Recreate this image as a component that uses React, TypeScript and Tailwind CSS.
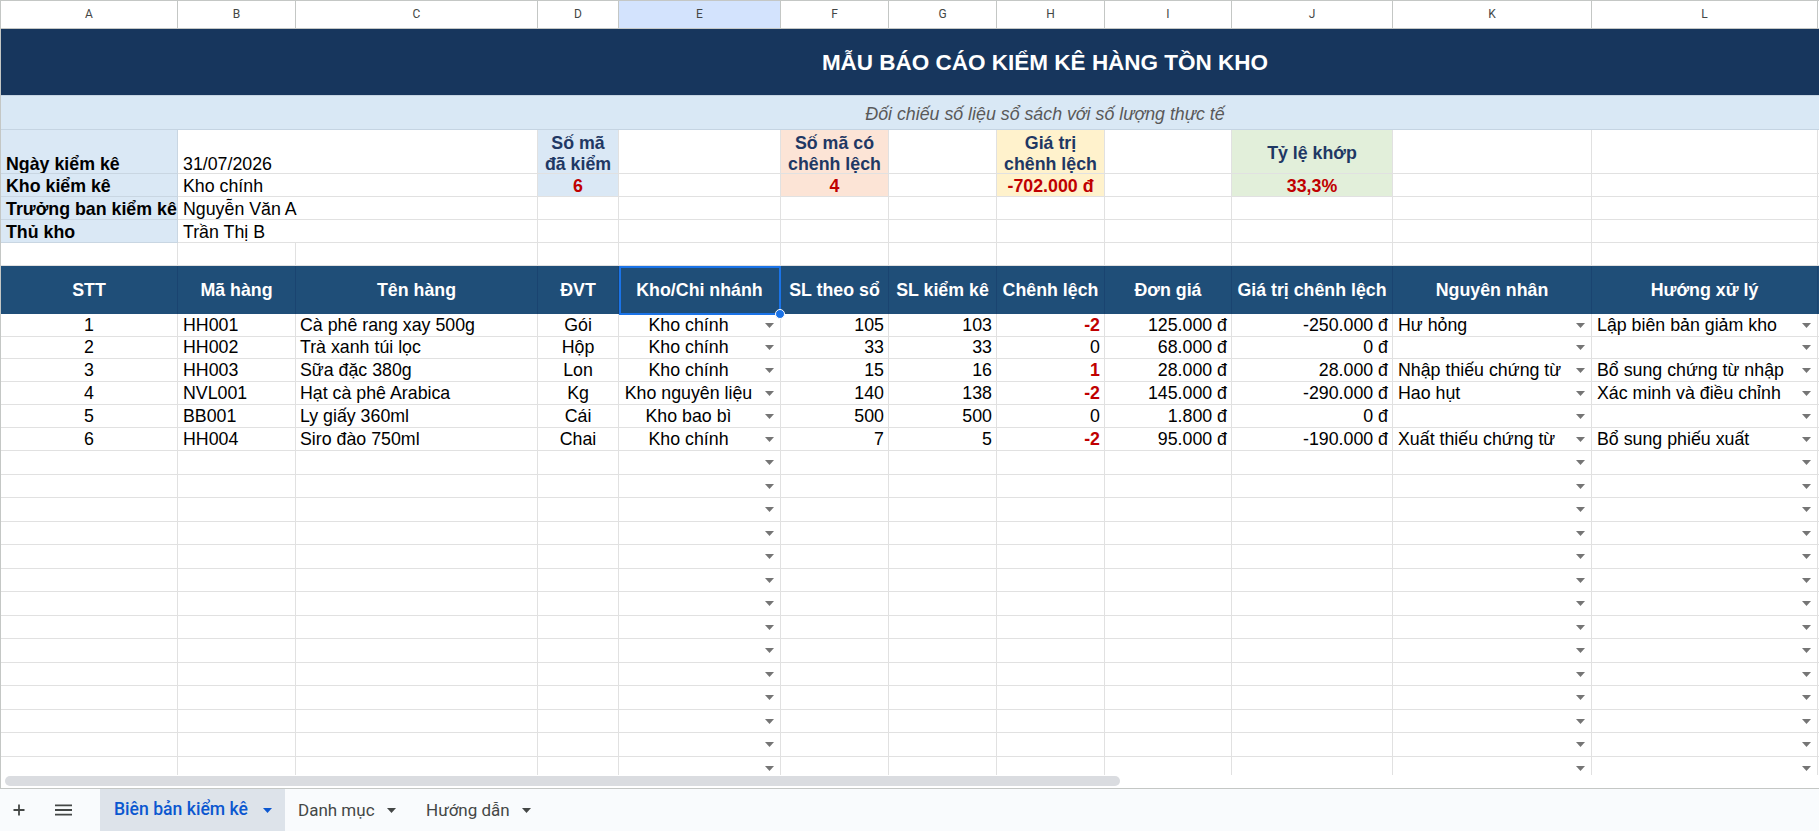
import React from "react";

const COLS = [
  "w-[177px]",
  "w-[118px]",
  "w-[242px]",
  "w-[81px]",
  "w-[162px]",
  "w-[108px]",
  "w-[108px]",
  "w-[108px]",
  "w-[127px]",
  "w-[161px]",
  "w-[199px]",
  "w-[226px]",
];
const LETTERS = ["A", "B", "C", "D", "E", "F", "G", "H", "I", "J", "K", "L"];
const GRID = "border-[#e1e1e1]";

type CellProps = { w: string; b?: string; className?: string; children?: React.ReactNode };
function Cell({ w, b = GRID, className = "", children }: CellProps) {
  return (
    <div
      className={`${w} ${b} shrink-0 h-full border-r border-b flex items-center whitespace-nowrap overflow-hidden ${className}`}
    >
      {children}
    </div>
  );
}

function Filler() {
  return <div className="flex-1 h-full border-b border-[#e1e1e1]" />;
}

function Arrow({ color = "#757575" }: { color?: string }) {
  return (
    <svg width="9" height="5" viewBox="0 0 9 5" className="shrink-0">
      <path d="M0 0H9L4.5 5Z" fill={color} />
    </svg>
  );
}

function ArrowBox() {
  return (
    <span className="w-[22px] h-full shrink-0 flex items-center justify-center">
      <Arrow />
    </span>
  );
}

const DATA: string[][] = [
  ["1", "HH001", "Cà phê rang xay 500g", "Gói", "Kho chính", "105", "103", "-2", "125.000 đ", "-250.000 đ", "Hư hỏng", "Lập biên bản giảm kho"],
  ["2", "HH002", "Trà xanh túi lọc", "Hộp", "Kho chính", "33", "33", "0", "68.000 đ", "0 đ", "", ""],
  ["3", "HH003", "Sữa đặc 380g", "Lon", "Kho chính", "15", "16", "1", "28.000 đ", "28.000 đ", "Nhập thiếu chứng từ", "Bổ sung chứng từ nhập"],
  ["4", "NVL001", "Hạt cà phê Arabica", "Kg", "Kho nguyên liệu", "140", "138", "-2", "145.000 đ", "-290.000 đ", "Hao hụt", "Xác minh và điều chỉnh"],
  ["5", "BB001", "Ly giấy 360ml", "Cái", "Kho bao bì", "500", "500", "0", "1.800 đ", "0 đ", "", ""],
  ["6", "HH004", "Siro đào 750ml", "Chai", "Kho chính", "7", "5", "-2", "95.000 đ", "-190.000 đ", "Xuất thiếu chứng từ", "Bổ sung phiếu xuất"],
];
const DATA_H = ["h-[23px]", "h-[22px]", "h-[23px]", "h-[23px]", "h-[23px]", "h-[23px]"];
const EMPTY_H = [
  "h-[24px]", "h-[23px]", "h-[24px]", "h-[23px]", "h-[24px]", "h-[23px]", "h-[24px]",
  "h-[23px]", "h-[24px]", "h-[23px]", "h-[24px]", "h-[23px]", "h-[24px]", "h-[23px]", "h-[24px]",
];
const HEADERS = [
  "STT", "Mã hàng", "Tên hàng", "ĐVT", "Kho/Chi nhánh", "SL theo sổ", "SL kiểm kê",
  "Chênh lệch", "Đơn giá", "Giá trị chênh lệch", "Nguyên nhân", "Hướng xử lý",
];

const LABEL = "bg-[#dae8f5] font-bold pl-[5px] text-black";
const NAVY = "text-[#1f3864] font-bold";
const RED = "text-[#c00000] font-bold";
const LOW = "items-end leading-[19px]";

function DataRow({ r, h }: { r: string[]; h: string }) {
  const diffNonZero = r[7] !== "0";
  return (
    <div className={`flex shrink-0 ${h}`}>
      <Cell w={COLS[0]} className="justify-center">{r[0]}</Cell>
      <Cell w={COLS[1]} className="pl-[5px]">{r[1]}</Cell>
      <Cell w={COLS[2]} className="pl-[4px]">{r[2]}</Cell>
      <Cell w={COLS[3]} className="justify-center">{r[3]}</Cell>
      <Cell w={COLS[4]}>
        <span className="flex-1 text-center">{r[4]}</span>
        <ArrowBox />
      </Cell>
      <Cell w={COLS[5]} className="justify-end pr-[4px]">{r[5]}</Cell>
      <Cell w={COLS[6]} className="justify-end pr-[4px]">{r[6]}</Cell>
      <Cell w={COLS[7]} className={`justify-end pr-[4px] ${diffNonZero ? RED : ""}`}>{r[7]}</Cell>
      <Cell w={COLS[8]} className="justify-end pr-[4px]">{r[8]}</Cell>
      <Cell w={COLS[9]} className="justify-end pr-[4px]">{r[9]}</Cell>
      <Cell w={COLS[10]}>
        <span className="flex-1 pl-[5px] overflow-hidden">{r[10]}</span>
        <ArrowBox />
      </Cell>
      <Cell w={COLS[11]}>
        <span className="flex-1 pl-[5px] overflow-hidden">{r[11]}</span>
        <ArrowBox />
      </Cell>
      <Filler />
    </div>
  );
}

function EmptyRow({ h }: { h: string }) {
  return (
    <div className={`flex shrink-0 ${h}`}>
      {COLS.map((w, i) => (
        <Cell key={i} w={w} className="justify-end">
          {i === 4 || i === 10 || i === 11 ? <ArrowBox /> : null}
        </Cell>
      ))}
      <Filler />
    </div>
  );
}

export default function App() {
  return (
    <div className="w-[1819px] h-[831px] overflow-hidden bg-white flex flex-col font-['Liberation_Sans',Arial,sans-serif] text-[17.8px] leading-[21px] text-black">
      {/* sheet area */}
      <div className="h-[788px] shrink-0 flex flex-col border-l border-[#c4c7c5] overflow-hidden">
        <div className="h-[775px] shrink-0 flex flex-col overflow-hidden">
          {/* column letters */}
          <div className="flex h-[29px] shrink-0 border-t border-[#c4c7c5]">
            {LETTERS.map((l, i) => (
              <div
                key={l}
                className={`${COLS[i]} shrink-0 h-full border-r border-b border-[#c4c7c5] flex items-center justify-center text-[12px] text-[#444746] font-['Roboto',Arial,sans-serif] ${
                  i === 4 ? "bg-[#d3e3fd]" : "bg-white"
                }`}
              >
                {l}
              </div>
            ))}
            <div className="flex-1 h-full border-b border-[#c4c7c5]" />
          </div>

          {/* title */}
          <div className="flex h-[67px] shrink-0 bg-[#17365d] border-b border-[#c5d4e2] overflow-hidden">
            <div className="w-[2088px] shrink-0 flex items-center justify-center text-white font-bold text-[22.5px] whitespace-nowrap">
              MẪU BÁO CÁO KIỂM KÊ HÀNG TỒN KHO
            </div>
          </div>

          {/* subtitle */}
          <div className="flex h-[34px] shrink-0 bg-[#d9e8f5] border-b border-[#c5d4e2] overflow-hidden">
            <div className="w-[2088px] shrink-0 flex items-center justify-center pt-[3px] italic text-[#595959] whitespace-nowrap">
              Đối chiếu số liệu sổ sách với số lượng thực tế
            </div>
          </div>

          {/* info row 1 */}
          <div className="flex h-[44px] shrink-0">
            <Cell w={COLS[0]} b="border-[#c9d6e2]" className={`${LABEL} items-end`}>
              <span className="-mb-[2px]">Ngày kiểm kê</span>
            </Cell>
            <Cell w="w-[360px]" className="pl-[5px] items-end">
              <span className="-mb-[2px]">31/07/2026</span>
            </Cell>
            <Cell w={COLS[3]} className={`bg-[#dae8f5] ${NAVY} items-end justify-center text-center`}>
              <span className="block -mb-[2px]">
                Số mã
                <br />
                đã kiểm
              </span>
            </Cell>
            <Cell w={COLS[4]} />
            <Cell w={COLS[5]} className={`bg-[#fce4d6] ${NAVY} items-end justify-center text-center`}>
              <span className="block -mb-[2px]">
                Số mã có
                <br />
                chênh lệch
              </span>
            </Cell>
            <Cell w={COLS[6]} />
            <Cell w={COLS[7]} className={`bg-[#fff2cc] ${NAVY} items-end justify-center text-center`}>
              <span className="block -mb-[2px]">
                Giá trị
                <br />
                chênh lệch
              </span>
            </Cell>
            <Cell w={COLS[8]} />
            <Cell w={COLS[9]} className={`bg-[#e2efda] ${NAVY} justify-center pt-[3px]`}>Tỷ lệ khớp</Cell>
            <Cell w={COLS[10]} />
            <Cell w={COLS[11]} />
            <Filler />
          </div>

          {/* info row 2 */}
          <div className="flex h-[23px] shrink-0">
            <Cell w={COLS[0]} b="border-[#c9d6e2]" className={`${LABEL} ${LOW}`}>Kho kiểm kê</Cell>
            <Cell w="w-[360px]" className={`pl-[5px] ${LOW}`}>Kho chính</Cell>
            <Cell w={COLS[3]} className={`bg-[#dae8f5] ${RED} justify-center ${LOW}`}>6</Cell>
            <Cell w={COLS[4]} />
            <Cell w={COLS[5]} className={`bg-[#fce4d6] ${RED} justify-center ${LOW}`}>4</Cell>
            <Cell w={COLS[6]} />
            <Cell w={COLS[7]} className={`bg-[#fff2cc] ${RED} justify-center ${LOW}`}>-702.000 đ</Cell>
            <Cell w={COLS[8]} />
            <Cell w={COLS[9]} className={`bg-[#e2efda] ${RED} justify-center ${LOW}`}>33,3%</Cell>
            <Cell w={COLS[10]} />
            <Cell w={COLS[11]} />
            <Filler />
          </div>

          {/* info row 3 */}
          <div className="flex h-[23px] shrink-0">
            <Cell w={COLS[0]} b="border-[#c9d6e2]" className={`${LABEL} ${LOW}`}>Trưởng ban kiểm kê</Cell>
            <Cell w="w-[360px]" className={`pl-[5px] ${LOW}`}>Nguyễn Văn A</Cell>
            {COLS.slice(3).map((w, i) => (
              <Cell key={i} w={w} />
            ))}
            <Filler />
          </div>

          {/* info row 4 */}
          <div className="flex h-[23px] shrink-0">
            <Cell w={COLS[0]} b="border-[#c9d6e2]" className={`${LABEL} ${LOW}`}>Thủ kho</Cell>
            <Cell w="w-[360px]" className={`pl-[5px] ${LOW}`}>Trần Thị B</Cell>
            {COLS.slice(3).map((w, i) => (
              <Cell key={i} w={w} />
            ))}
            <Filler />
          </div>

          {/* spacer row */}
          <div className="flex h-[23px] shrink-0">
            {COLS.map((w, i) => (
              <Cell key={i} w={w} />
            ))}
            <Filler />
          </div>

          {/* table header */}
          <div className="flex h-[48px] shrink-0 bg-[#1f4e78]">
            {HEADERS.map((t, i) =>
              i === 4 ? (
                <div
                  key={t}
                  className={`${COLS[i]} relative shrink-0 h-full border-r border-[#1a4470] flex items-center justify-center text-white font-bold whitespace-nowrap`}
                >
                  {t}
                  <div className="absolute left-0 top-0 -right-px -bottom-px border-2 border-[#1a73e8] pointer-events-none" />
                  <div className="absolute -right-[5px] -bottom-[5px] w-[10px] h-[10px] rounded-full bg-[#1a73e8] border border-white z-10" />
                </div>
              ) : (
                <div
                  key={t}
                  className={`${COLS[i]} shrink-0 h-full border-r border-[#1a4470] flex items-center justify-center text-white font-bold whitespace-nowrap overflow-hidden`}
                >
                  {t}
                </div>
              )
            )}
            <div className="flex-1 h-full" />
          </div>

          {/* data rows */}
          {DATA.map((r, i) => (
            <DataRow key={i} r={r} h={DATA_H[i]} />
          ))}
          {EMPTY_H.map((h, i) => (
            <EmptyRow key={i} h={h} />
          ))}
        </div>

        {/* horizontal scrollbar */}
        <div className="h-[13px] shrink-0 pt-[1px] pl-[4px]">
          <div className="w-[1115px] h-[10px] rounded-full bg-[#dadce0]" />
        </div>
      </div>

      {/* sheet tabs */}
      <div className="h-[43px] shrink-0 border-t border-[#c4c7c5] bg-[#f9fbfd] flex items-stretch font-['Roboto',Arial,sans-serif]">
        <div className="w-[38px] shrink-0 flex items-center justify-center">
          <svg width="12" height="12" viewBox="0 0 12 12">
            <path d="M6 0.5V11.5M0.5 6H11.5" stroke="#444746" strokeWidth="1.8" />
          </svg>
        </div>
        <div className="w-[50px] shrink-0 flex items-center justify-center">
          <svg width="17" height="12" viewBox="0 0 17 12">
            <path d="M0 1.3H17M0 6H17M0 10.7H17" stroke="#444746" strokeWidth="1.8" />
          </svg>
        </div>
        <div className="w-[12px] shrink-0" />
        <div className="w-[185px] shrink-0 bg-[#dde3ea] flex items-center pl-[14px] text-[17.6px] font-medium text-[#0b57d0] leading-none whitespace-nowrap">
          Biên bản kiểm kê
          <span className="ml-auto mr-[13px] flex">
            <Arrow color="#0b57d0" />
          </span>
        </div>
        <div className="w-[128px] shrink-0 flex items-center pl-[13px] text-[17px] text-[#444746] leading-none whitespace-nowrap">
          Danh mục
          <span className="ml-auto mr-[17px] flex">
            <Arrow color="#444746" />
          </span>
        </div>
        <div className="w-[132px] shrink-0 flex items-center pl-[13px] text-[17px] text-[#444746] leading-none whitespace-nowrap">
          Hướng dẫn
          <span className="ml-auto mr-[14px] flex">
            <Arrow color="#444746" />
          </span>
        </div>
        <div className="flex-1" />
      </div>
    </div>
  );
}
